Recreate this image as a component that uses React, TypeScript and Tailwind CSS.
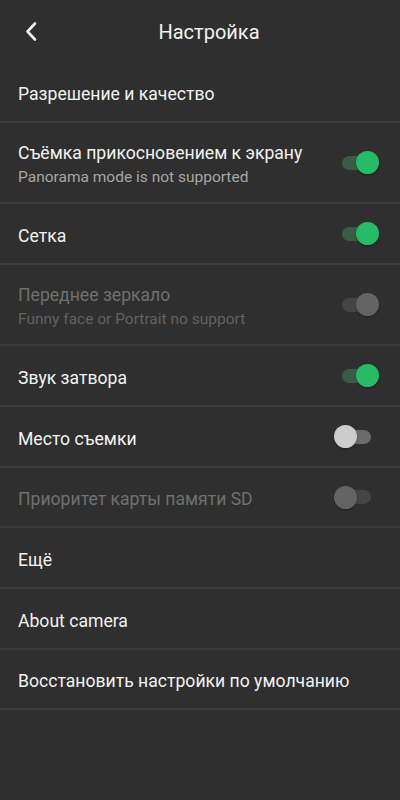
import React from "react";

type Sw = "on" | "off" | "dis-on" | "dis-off";

function Toggle({ state }: { state: Sw }) {
  const track =
    state === "on"
      ? "bg-[#3a5c46]"
      : state === "off"
      ? "bg-[#6b6b6b]"
      : "bg-[#454545]";
  const thumb =
    state === "on"
      ? "bg-[#27bb67]"
      : state === "off"
      ? "bg-[#cccccc]"
      : "bg-[#636363]";
  const right = state === "on" || state === "dis-on";
  return (
    <div className="relative w-[45px] h-[23px] mr-[21px] shrink-0">
      <div className={`absolute left-[8px] top-[4.5px] w-[29px] h-[14px] rounded-full ${track}`} />
      <div
        className={`absolute top-0 w-[23px] h-[23px] rounded-full shadow-[0_1px_2px_rgba(0,0,0,0.35)] ${thumb} ${
          right ? "left-[22px]" : "left-0"
        }`}
      />
    </div>
  );
}

function Row({
  title,
  sub,
  sw,
  disabled,
  tall,
  short,
}: {
  title: string;
  sub?: string;
  sw?: Sw;
  disabled?: boolean;
  tall?: boolean;
  short?: boolean;
}) {
  return (
    <div
      className={`flex items-center justify-between pl-[18px] border-b-2 border-[#3c3c3c] ${
        tall ? "h-[81px]" : short ? "h-[60px]" : "h-[61px]"
      }`}
    >
      <div className="flex flex-col pt-[4px]">
        <div
          className={`text-[17.6px] leading-[22px] ${
            disabled ? "text-[#707070]" : "text-[#f2f2f2]"
          }`}
        >
          {title}
        </div>
        {sub && (
          <div
            className={`text-[15.5px] leading-[20px] mt-[3px] ${
              disabled ? "text-[#626262]" : "text-[#a6a6a6]"
            }`}
          >
            {sub}
          </div>
        )}
      </div>
      {sw && <Toggle state={sw} />}
    </div>
  );
}

export default function App() {
  return (
    <div
      className="w-[400px] h-[800px] bg-[#2f2f2f] overflow-hidden"
      style={{ fontFamily: "Roboto, 'Noto Sans', sans-serif" }}
    >
      <div className="relative h-[62px] flex items-center justify-center">
        <svg
          className="absolute left-[24px] top-[21px]"
          width="14"
          height="21"
          viewBox="0 0 14 21"
          fill="none"
        >
          <path
            d="M11 2.5 L3.5 10.5 L11 18.5"
            stroke="#f2f2f2"
            strokeWidth="2.6"
            strokeLinecap="round"
            strokeLinejoin="round"
          />
        </svg>
        <div className="text-[20px] text-[#f2f2f2] ml-[18px] mt-[1px]">Настройка</div>
      </div>
      <Row title="Разрешение и качество" />
      <Row
        title="Съёмка прикосновением к экрану"
        sub="Panorama mode is not supported"
        sw="on"
        tall
      />
      <Row title="Сетка" sw="on" />
      <Row
        title="Переднее зеркало"
        sub="Funny face or Portrait no support"
        sw="dis-on"
        disabled
        tall
      />
      <Row title="Звук затвора" sw="on" />
      <Row title="Место съемки" sw="off" />
      <Row title="Приоритет карты памяти SD" sw="dis-off" disabled short />
      <Row title="Ещё" />
      <Row title="About camera" />
      <Row title="Восстановить настройки по умолчанию" short />
    </div>
  );
}
